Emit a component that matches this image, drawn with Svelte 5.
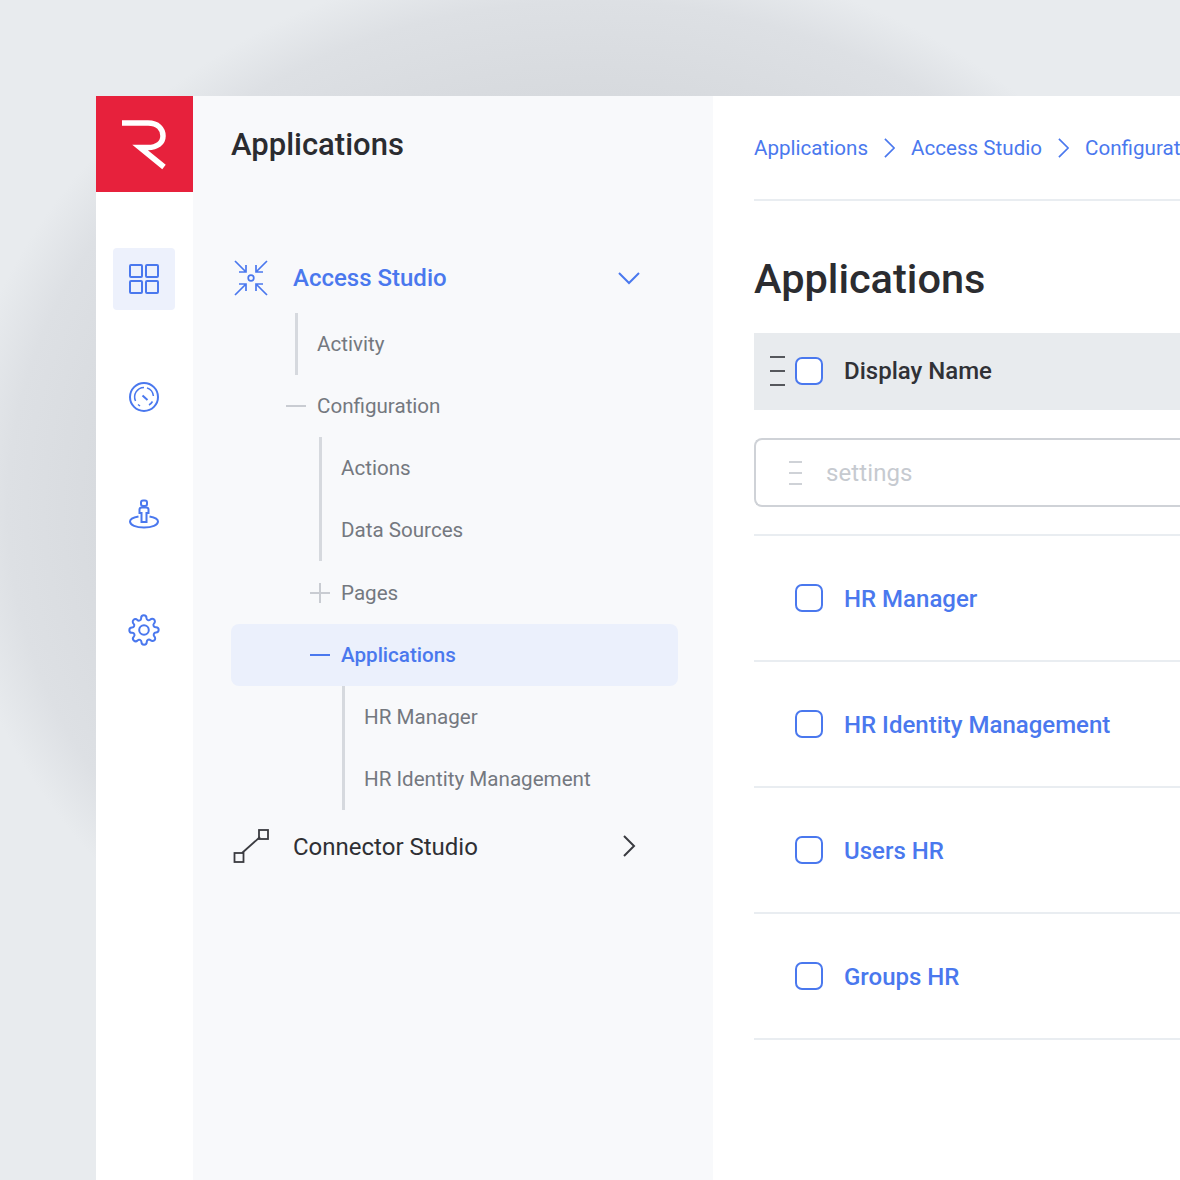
<script lang="ts">
  const apps = ['HR Manager', 'HR Identity Management', 'Users HR', 'Groups HR'];
  const crumbs = ['Applications', 'Access Studio', 'Configuration'];
</script>

<div class="stage">
  <div class="window">
    <nav class="rail">
      <div class="logo">
        <svg viewBox="0 0 97 97" width="97" height="97" aria-hidden="true">
          <path d="M26 27H52C62 27 67 33 67 40C67 47 61 51.500 52 51.500H44L68 71" />
        </svg>
      </div>
      <div class="rail-items">
        <button class="rail-btn active" aria-label="Dashboard">
          <svg viewBox="0 0 32 32" width="32" height="32" aria-hidden="true">
            <rect x="2" y="2" width="12" height="12" rx="1" />
            <rect x="18" y="2" width="12" height="12" rx="1" />
            <rect x="2" y="18" width="12" height="12" rx="1" />
            <rect x="18" y="18" width="12" height="12" rx="1" />
          </svg>
        </button>
        <button class="rail-btn" aria-label="Monitor">
          <svg viewBox="0 0 32 32" width="32" height="32" aria-hidden="true">
            <circle cx="16" cy="16" r="14" />
            <path class="thin" d="M7.500 20A9.600 9.600 0 0 1 16 6.400M19 6.900A9.600 9.600 0 0 1 25.400 15M24.500 20.500A9.600 9.600 0 0 1 21 24M10 23.500L12 25" />
            <path d="M14.500 14.500L19.500 19" />
          </svg>
        </button>
        <button class="rail-btn" aria-label="Identity">
          <svg viewBox="0 0 32 32" width="32" height="32" aria-hidden="true">
            <rect x="13" y="1.500" width="6" height="5.500" rx="2" />
            <path d="M11.500 14V10.500C11.500 9 12.500 8.500 14 8.500H18C19.500 8.500 20.500 9 20.500 10.500V14H18.500V23H13.500V14Z" />
            <path d="M10.500 17.500C5 18.500 2 20.500 2 22.500C2 26 8 28.500 16 28.500S30 26 30 22.500C30 20.500 27 18.500 21.500 17.500" />
          </svg>
        </button>
        <button class="rail-btn gear" aria-label="Settings">
          <svg viewBox="0 0 24 24" width="32" height="32" aria-hidden="true">
            <circle cx="12" cy="12" r="3.600" />
            <path d="M19.400 15a1.650 1.650 0 0 0 .33 1.820l.06.06a2 2 0 1 1-2.830 2.830l-.06-.06a1.650 1.650 0 0 0-2.820 1.170V21a2 2 0 1 1-4 0v-.09a1.650 1.650 0 0 0-2.850-1.110l-.06.06a2 2 0 1 1-2.830-2.830l.06-.06a1.650 1.650 0 0 0-1.170-2.820H3a2 2 0 1 1 0-4h.09a1.650 1.650 0 0 0 1.110-2.850l-.06-.06a2 2 0 1 1 2.830-2.830l.06.06a1.650 1.650 0 0 0 2.820-1.170V3a2 2 0 1 1 4 0v.09a1.650 1.650 0 0 0 2.850 1.110l.06-.06a2 2 0 1 1 2.830 2.830l-.06.06a1.650 1.650 0 0 0 1.170 2.820H21a2 2 0 1 1 0 4h-.09a1.650 1.650 0 0 0-1.510 1.150z" />
          </svg>
        </button>
      </div>
    </nav>

    <aside class="panel">
      <h2>Applications</h2>
      <div class="tree">
        <div class="row top current">
          <svg class="top-icon" viewBox="0 0 36 36" width="36" height="36" aria-hidden="true">
            <circle cx="18" cy="18" r="2.800" />
            <path d="M2 1L13 12M6 12H13V5M34 1L23 12M30 12H23V5M2 35L13 24M6 24H13V31M34 35L23 24M30 24H23V31" />
          </svg>
          <span class="top-label">Access Studio</span>
          <svg class="caret" viewBox="0 0 24 24" width="24" height="24" aria-hidden="true"><path d="M2 7L12 17L22 7" /></svg>
        </div>

        <div class="guide g1"><div class="row">Activity</div></div>
        <div class="row l1"><span class="mark dash"></span>Configuration</div>
        <div class="guide g2">
          <div class="row">Actions</div>
          <div class="row">Data Sources</div>
        </div>
        <div class="row l2"><span class="mark plus"></span>Pages</div>
        <div class="row l2 selected"><span class="mark dash"></span>Applications</div>
        <div class="guide g3">
          <div class="row">HR Manager</div>
          <div class="row">HR Identity Management</div>
        </div>

        <div class="row top connector">
          <svg class="top-icon" viewBox="0 0 36 36" width="36" height="36" aria-hidden="true">
            <rect x="1.500" y="24" width="9" height="9" />
            <rect x="26" y="1" width="9" height="9" />
            <path d="M9 24L27 8" />
          </svg>
          <span class="top-label">Connector Studio</span>
          <svg class="caret" viewBox="0 0 24 24" width="24" height="24" aria-hidden="true"><path d="M7 2L17 12L7 22" /></svg>
        </div>
      </div>
    </aside>

    <main class="content">
      <div class="crumbs">
        {#each crumbs as crumb, i}
          {#if i > 0}
            <svg viewBox="0 0 12 22" width="11" height="22" aria-hidden="true"><path d="M1 1L11 11L1 21" /></svg>
          {/if}
          <span>{crumb}</span>
        {/each}
      </div>

      <h1>Applications</h1>

      <div class="thead">
        <span class="handle"><i></i><i></i><i></i></span>
        <span class="check"></span>
        <span>Display Name</span>
      </div>

      <div class="filter">
        <span class="handle light"><i></i><i></i><i></i></span>
        <span>settings</span>
      </div>

      <div class="rows">
        {#each apps as app}
          <div class="app-row">
            <span class="check"></span>
            <span class="app-name">{app}</span>
          </div>
        {/each}
      </div>
    </main>
  </div>
</div>

<style>
  :global(html), :global(body) {
    margin: 0;
    overflow: hidden;
  }

  .stage {
    height: 1180px;
    box-sizing: border-box;
    padding: 96px 0 0 96px;
    overflow: hidden;
    background: #e8ebee radial-gradient(ellipse 640px 556px at 590px 507px, #c8cbd0 0%, #d7dade 74%, #dde0e4 91%, #e8ebee 100%);
    font-family: Roboto, "Liberation Sans", sans-serif;
  }

  .window {
    display: flex;
    width: 1084px;
    height: 1084px;
    background: #fff;
    overflow: hidden;
  }

  .rail {
    flex: 0 0 97px;
  }

  .logo {
    height: 96px;
    background: #e7213c;
  }

  .logo svg {
    display: block;
    fill: none;
    stroke: #fff;
    stroke-width: 5.500;
  }

  .rail-items {
    display: flex;
    flex-direction: column;
    align-items: center;
    gap: 56px;
    padding: 56px 1px 0 0;
  }

  .rail-btn {
    display: flex;
    align-items: center;
    justify-content: center;
    width: 62px;
    height: 62px;
    padding: 0;
    border: 0;
    border-radius: 4px;
    background: none;
  }

  .rail-btn.active {
    background: #edf1fc;
  }

  .rail-btn svg {
    fill: none;
    stroke: #4a78ee;
    stroke-width: 2;
  }

  .rail-btn .thin {
    stroke-width: 1.500;
  }

  .rail-btn.gear {
    margin-top: -3px;
  }

  .rail-btn.gear svg {
    stroke-width: 1.500;
  }

  .panel {
    flex: 0 0 520px;
    box-sizing: border-box;
    padding-left: 38px;
    background: #f8f9fb;
  }

  .panel h2 {
    margin: 0;
    height: 151px;
    padding-top: 29px;
    box-sizing: border-box;
    font-size: 31px;
    line-height: 40px;
    font-weight: 500;
    color: #2b2c30;
  }

  .tree {
    width: 447px;
    font-size: 20.600px;
    color: #74787f;
  }

  .row {
    display: flex;
    align-items: center;
    height: 62.100px;
    white-space: nowrap;
  }

  .l1 {
    padding-left: 55px;
  }

  .l2 {
    padding-left: 79px;
  }

  .mark {
    position: relative;
    flex: 0 0 20px;
    height: 2px;
    margin-right: 11px;
    background: #c9ccd2;
  }

  .plus::after {
    content: '';
    position: absolute;
    left: 9px;
    top: -9px;
    width: 2px;
    height: 20px;
    background: #c9ccd2;
  }

  .selected {
    border-radius: 8px;
    background: #ebf0fc;
    color: #4a78ee;
    font-weight: 500;
  }

  .selected .mark {
    background: #4a78ee;
  }

  .guide {
    border-left: 3px solid #d6d9de;
    padding-left: 19px;
  }

  .g1 {
    margin: 4px 0 0 64px;
  }

  .g2 {
    margin-left: 88px;
  }

  .g3 {
    margin-left: 111px;
  }

  .top {
    font-size: 24px;
    color: #2f3034;
  }

  .top.current {
    color: #4a78ee;
    font-weight: 500;
  }

  .top.connector {
    margin-top: 6px;
    font-weight: 400;
  }

  .top-icon {
    flex: 0 0 36px;
    margin: 0 24px 0 2px;
    fill: none;
    stroke: #4a78ee;
    stroke-width: 1.700;
  }

  .connector .top-icon {
    stroke: #3a3b40;
    stroke-width: 1.800;
  }

  .top-label {
    flex: 1;
  }

  .caret {
    margin-right: 37px;
    fill: none;
    stroke: #4a78ee;
    stroke-width: 2;
  }

  .connector .caret {
    margin-bottom: 2px;
    stroke: #3a3b40;
  }

  .content {
    flex: 1;
    min-width: 0;
    padding-left: 41px;
  }

  .crumbs {
    display: flex;
    align-items: center;
    gap: 16px;
    height: 105px;
    box-sizing: border-box;
    border-bottom: 2px solid #e9edf1;
    font-size: 20.600px;
    color: #4a78ee;
    white-space: nowrap;
  }

  .crumbs svg {
    flex: none;
    fill: none;
    stroke: #4a78ee;
    stroke-width: 1.800;
  }

  h1 {
    margin: 0;
    height: 132px;
    padding-top: 54px;
    box-sizing: border-box;
    font-size: 41.500px;
    line-height: 48px;
    font-weight: 500;
    color: #2b2c30;
  }

  .thead {
    display: flex;
    align-items: center;
    box-sizing: border-box;
    height: 77px;
    padding: 0 0 1px 16px;
    background: #e8ebee;
    font-size: 24px;
    font-weight: 500;
    color: #303136;
  }

  .handle {
    display: flex;
    flex-direction: column;
    justify-content: space-between;
    width: 15px;
    height: 30px;
    margin-right: 10px;
  }

  .handle i {
    height: 2px;
    background: #55575c;
  }

  .handle.light {
    width: 13px;
    height: 24px;
    margin: 0 24px 0 0;
  }

  .handle.light i {
    background: #cfd2d7;
  }

  .check {
    flex: none;
    box-sizing: border-box;
    width: 28px;
    height: 28px;
    margin-right: 21px;
    border: 2px solid #4a78ee;
    border-radius: 7px;
    background: #fff;
  }

  .filter {
    display: flex;
    align-items: center;
    box-sizing: border-box;
    height: 69px;
    margin: 28px 0 27px;
    padding-left: 33px;
    border: 2px solid #cfd2d7;
    border-right: 0;
    border-radius: 8px 0 0 8px;
    font-size: 24px;
    letter-spacing: 0.1px;
    color: #c6cad0;
  }

  .rows {
    border-top: 2px solid #e9edf1;
  }

  .app-row {
    display: flex;
    align-items: center;
    box-sizing: border-box;
    height: 126px;
    padding-left: 41px;
    border-bottom: 2px solid #e9edf1;
    font-size: 24px;
    font-weight: 500;
    color: #4a78ee;
  }

  .app-name {
    margin-top: 2px;
  }
</style>
